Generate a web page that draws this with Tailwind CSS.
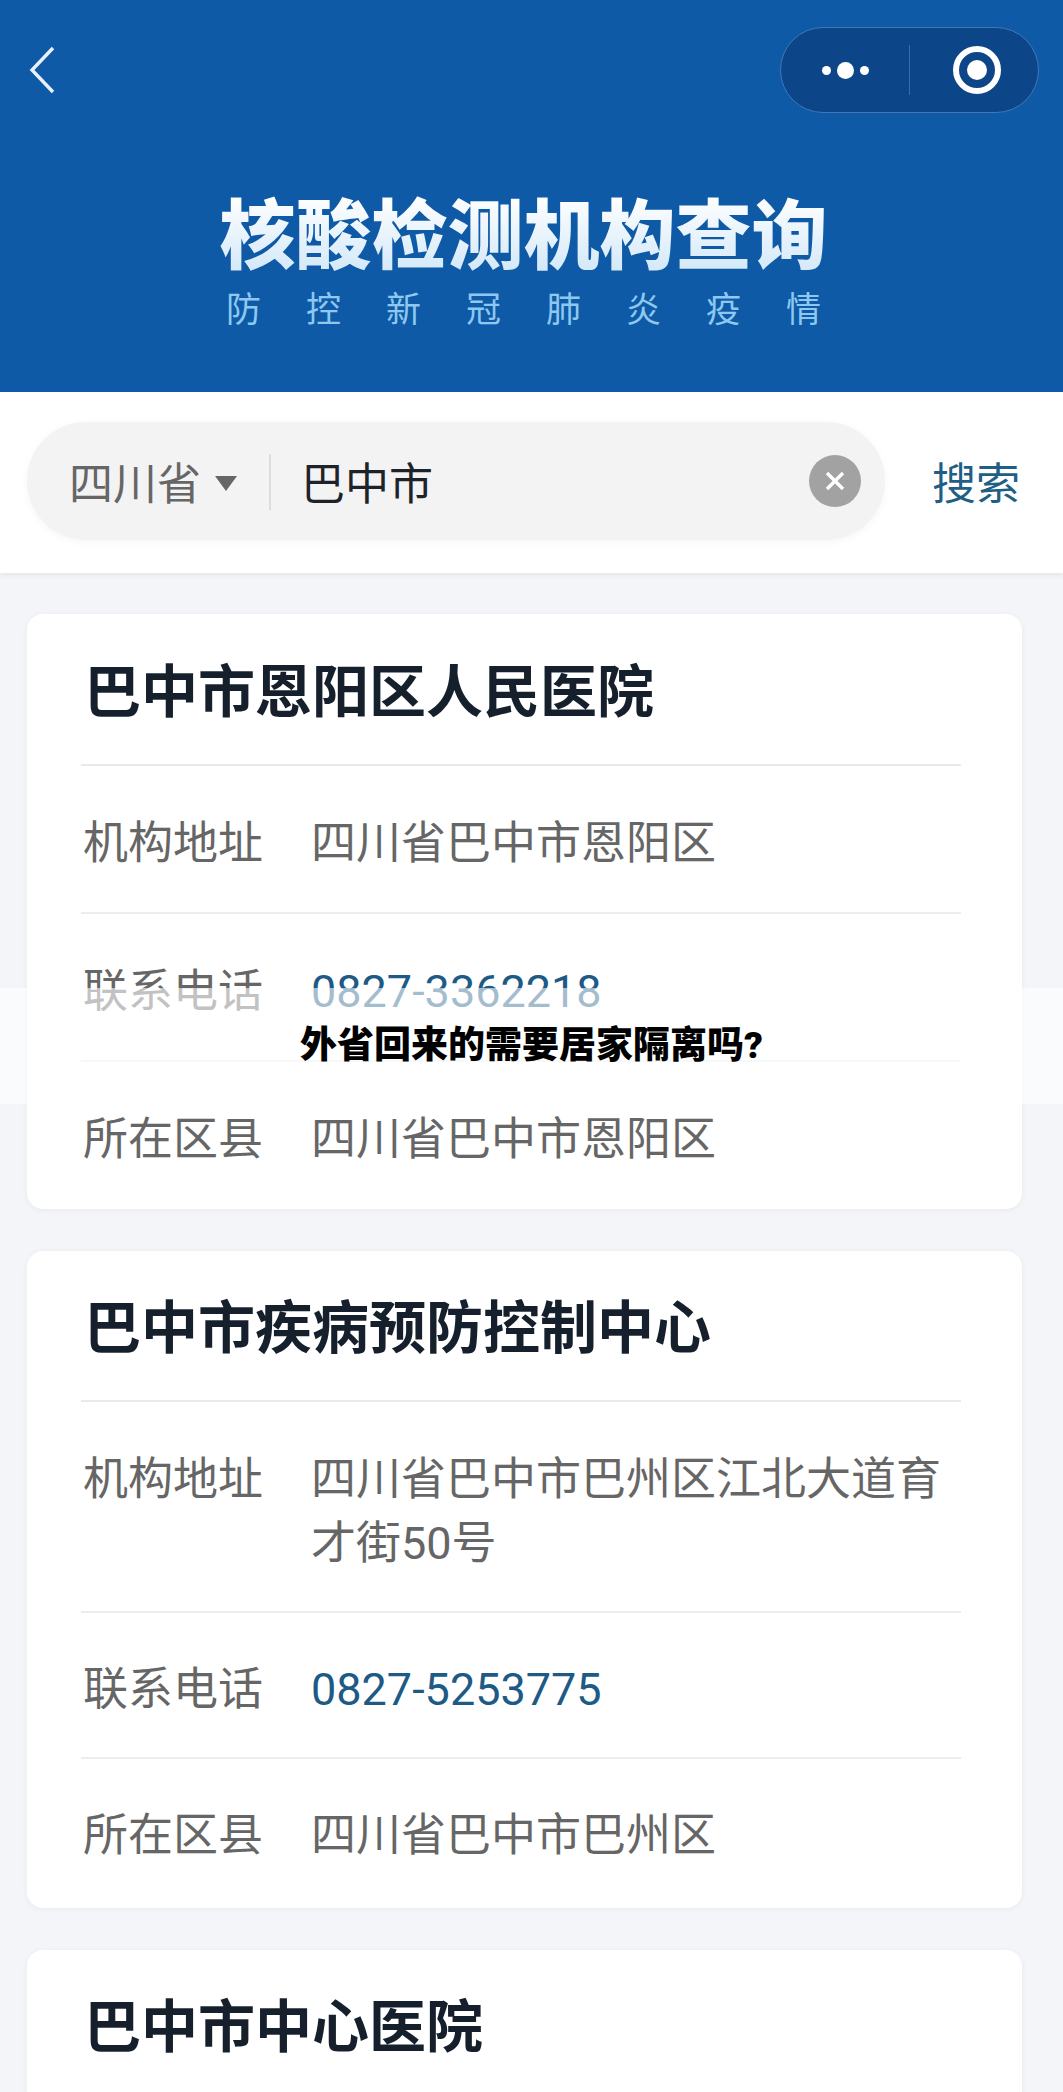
<!DOCTYPE html>
<html lang="zh-CN">
<head>
<meta charset="utf-8">
<script src="https://cdn.jsdelivr.net/npm/@tailwindcss/browser@4"></script>
</head>
<body class="m-0">
<div class="relative w-[1063px] h-[2092px] overflow-hidden bg-[#f3f5f9] font-['Roboto','Noto_Sans_CJK_SC',sans-serif]">

  <header class="relative h-[392px] bg-[#0f5aa6]">
    <div class="flex items-start justify-between pl-[28px] pr-[24px] pt-[27px] h-[194px]">
      <svg class="mt-[19px] w-[28px] h-[48px]" viewBox="0 0 28 48" fill="none" stroke="#e8f2fb" stroke-width="3.4"><path d="M25 2 L4 24 L25 46"/></svg>
      <div class="flex items-center w-[259px] h-[86px] rounded-full bg-[#0d4688] border border-[#3f78b8]">
        <div class="flex items-center justify-center gap-[6px] w-[128px] h-full">
          <span class="w-[9px] h-[9px] rounded-full bg-white"></span>
          <span class="w-[17px] h-[17px] rounded-full bg-white"></span>
          <span class="w-[9px] h-[9px] rounded-full bg-white"></span>
        </div>
        <div class="w-px h-[50px] bg-[#3a6ea9]"></div>
        <div class="flex items-center justify-center flex-1 h-full pl-[6px]">
          <div class="flex items-center justify-center w-[48px] h-[48px] rounded-full border-[6px] border-white">
            <span class="w-[20px] h-[20px] rounded-full bg-white"></span>
          </div>
        </div>
      </div>
    </div>
    <h1 class="pr-[16px] text-center text-[76px] leading-[86px] font-black bg-gradient-to-b from-white to-[#cfe6f8] bg-clip-text text-transparent">核酸检测机构查询</h1>
    <p class="mt-[9px] pr-[16px] flex justify-center gap-[45px] text-[35px] leading-[44px] text-[#8cc8f0]">
      <span>防</span><span>控</span><span>新</span><span>冠</span><span>肺</span><span>炎</span><span>疫</span><span>情</span>
    </p>
  </header>

  <section class="flex items-center h-[181px] pl-[27px] pb-[4px] bg-white shadow-[0_2px_6px_rgba(0,0,0,0.07)]">
    <div class="flex items-center w-[858px] h-[118px] rounded-full bg-[#f3f3f3] shadow-[0_2px_8px_rgba(0,0,0,0.04)] pl-[42px] pr-[24px]">
      <span class="mt-[8px] text-[44px] leading-[64px] text-[#666666]">四川省</span>
      <span class="ml-[14px] mt-[6px] w-0 h-0 border-x-[11px] border-x-transparent border-t-[15px] border-t-[#666666]"></span>
      <span class="ml-[32px] mt-[2px] w-[2px] h-[56px] bg-[#dddddd]"></span>
      <span class="ml-[30px] mt-[8px] text-[44px] leading-[64px] text-[#1d2329]">巴中市</span>
      <span class="ml-auto flex items-center justify-center w-[52px] h-[52px] rounded-full bg-[#a2a2a2]">
        <svg class="w-[22px] h-[22px]" viewBox="0 0 22 22" stroke="#ffffff" stroke-width="3.4"><path d="M3 3 L19 19 M19 3 L3 19"/></svg>
      </span>
    </div>
    <span class="ml-[47px] mt-[8px] text-[44px] leading-[64px] text-[#1f5f85]">搜索</span>
  </section>

  <main class="flex flex-col gap-[42px] pt-[41px] pl-[27px] w-[1022px]">
    <article class="h-[595px] rounded-[16px] bg-white shadow-[0_1px_6px_rgba(0,0,0,0.05)] pl-[54px] pr-[61px]">
      <h2 class="h-[152px] pt-[46px] pl-[3px] text-[57px] leading-[66px] font-bold text-[#16202c] border-b-2 border-[#e9eaec]">巴中市恩阳区人民医院</h2>
      <div class="flex pt-[46px] pb-[36px] text-[45px] leading-[64px] text-[#666666] border-b-2 border-[#eceded]"><span class="w-[230px] shrink-0 pl-[2px]">机构地址</span><span>四川省巴中市恩阳区</span></div>
      <div class="flex pt-[46px] pb-[36px] text-[45px] leading-[64px] text-[#666666] border-b-2 border-[#eceded]"><span class="w-[230px] shrink-0 pl-[2px]">联系电话</span><span class="text-[#1d5a85]">0827-3362218</span></div>
      <div class="flex pt-[46px] pb-[36px] text-[45px] leading-[64px] text-[#666666]"><span class="w-[230px] shrink-0 pl-[2px]">所在区县</span><span>四川省巴中市恩阳区</span></div>
    </article>

    <article class="h-[657px] rounded-[16px] bg-white shadow-[0_1px_6px_rgba(0,0,0,0.05)] pl-[54px] pr-[61px]">
      <h2 class="h-[151px] pt-[45px] pl-[3px] text-[57px] leading-[66px] font-bold text-[#16202c] border-b-2 border-[#e9eaec]">巴中市疾病预防控制中心</h2>
      <div class="flex pt-[46px] pb-[35px] text-[45px] leading-[64px] text-[#666666] border-b-2 border-[#eceded]"><span class="w-[230px] shrink-0 pl-[2px]">机构地址</span><span>四川省巴中市巴州区江北大道育才街50号</span></div>
      <div class="flex pt-[45px] pb-[35px] text-[45px] leading-[64px] text-[#666666] border-b-2 border-[#eceded]"><span class="w-[230px] shrink-0 pl-[2px]">联系电话</span><span class="text-[#1d5a85]">0827-5253775</span></div>
      <div class="flex pt-[45px] pb-[36px] text-[45px] leading-[64px] text-[#666666]"><span class="w-[230px] shrink-0 pl-[2px]">所在区县</span><span>四川省巴中市巴州区</span></div>
    </article>

    <article class="h-[300px] rounded-[16px] bg-white shadow-[0_1px_6px_rgba(0,0,0,0.05)] pl-[54px] pr-[61px]">
      <h2 class="pt-[45px] pl-[3px] text-[57px] leading-[66px] font-bold text-[#16202c]">巴中市中心医院</h2>
    </article>
  </main>

  <div class="absolute left-0 top-[988px] flex justify-center w-full h-[116px] bg-white/60">
    <p class="mt-[33px] h-[50px] text-[37px] leading-[50px] font-black text-black">外省回来的需要居家隔离吗?</p>
  </div>
</div>
</body>
</html>
